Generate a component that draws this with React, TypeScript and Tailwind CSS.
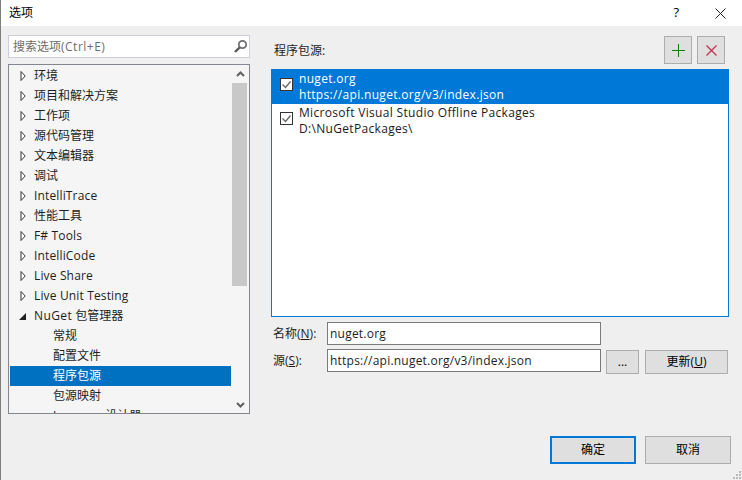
import { ReactNode } from 'react';

const font = "font-['Open_Sans','Noto_Sans_CJK_SC',sans-serif]";

const treeItems = ['环境', '项目和解决方案', '工作项', '源代码管理', '文本编辑器', '调试', 'IntelliTrace', '性能工具', 'F# Tools', 'IntelliCode', 'Live Share', 'Live Unit Testing'];
const subItems = ['常规', '配置文件', '程序包源', '包源映射'];

function Collapsed() {
  return (
    <svg width="6" height="10" viewBox="0 0 6 10" className="shrink-0">
      <path d="M1 .5 L5.2 5 L1 9.5 Z" fill="#fff" stroke="#333" strokeWidth="1" />
    </svg>
  );
}

function Expanded() {
  return (
    <svg width="7" height="7" viewBox="0 0 7 7" className="shrink-0">
      <path d="M7 0 V7 H0 Z" fill="#222" />
    </svg>
  );
}

function Check() {
  return (
    <div className="w-[13px] h-[13px] border border-[#333] bg-white flex items-center justify-center shrink-0">
      <svg width="11" height="11" viewBox="0 0 11 11">
        <path d="M1.5 5.5 L4.5 8.5 L9.5 2.5" fill="none" stroke="#666" strokeWidth="1.3" />
      </svg>
    </div>
  );
}

function Button({ className, children, primary }: { className: string; children: ReactNode; primary?: boolean }) {
  return (
    <div className={`flex items-center justify-center bg-[#dfdfdf] text-[12px] text-black ${primary ? 'border-2 border-[#0078d7]' : 'border border-[#adadad]'} ${className}`}>
      {children}
    </div>
  );
}

function Source({ name, url, selected }: { name: string; url: string; selected?: boolean }) {
  return (
    <div className={`flex h-[35px] pl-[8px] ${selected ? 'bg-[#0078d7] text-white' : '-mt-px text-[#1a1a1a]'}`}>
      <div className="pt-[9px] pr-[6px]"><Check /></div>
      <div className="text-[12px] leading-[16px] pt-[2px] tracking-[0.32px]">
        <div>{name}</div>
        <div>{url}</div>
      </div>
    </div>
  );
}

export default function App() {
  return (
    <div className={`w-[742px] h-[480px] bg-[#efefef] border-l border-[#7f7f7f] overflow-hidden relative ${font}`}>
      <div className="h-[26px] bg-white flex items-center text-[12px] text-black">
        <span className="pl-[8px] flex-1">选项</span>
        <span className="mr-[36px] text-[13px]">?</span>
        <svg width="11" height="11" viewBox="0 0 11 11" className="mr-[16px]">
          <path d="M.5 .5 L10.5 10.5 M10.5 .5 L.5 10.5" stroke="#222" strokeWidth="1" fill="none" />
        </svg>
      </div>

      <div className="flex">
        <div className="w-[242px] ml-[7px] mt-[9px] shrink-0">
          <div className="h-[23px] bg-white border border-[#cccedb] flex items-center justify-between pl-[4px] pr-[1px]">
            <span className="text-[12px] text-[#6d6d6d]">搜索选项<span className="tracking-[0.5px]">(Ctrl+E)</span></span>
            <svg width="15" height="15" viewBox="0 0 15 15">
              <circle cx="9.5" cy="5.5" r="3.7" fill="none" stroke="#707070" strokeWidth="1.8" />
              <path d="M6.7 8.3 L2 13" stroke="#5a5a5a" strokeWidth="2.4" />
            </svg>
          </div>
          <div className="h-[350px] mt-[6px] border border-[#828790] bg-[#f5f5f5] flex overflow-hidden">
            <div className="flex-1 pt-[1px] pl-[1px] text-[12px] text-[#1e1e1e] min-w-0">
              {treeItems.map((t) => (
                <div key={t} className="h-[20px] flex items-center pl-[10px]">
                  <Collapsed />
                  <span className={`ml-[8px] ${/^[ -~]+$/.test(t) ? 'tracking-[0.15px]' : ''}`}>{t}</span>
                </div>
              ))}
              <div className="h-[20px] flex items-center pl-[9px]">
                <Expanded />
                <span className="ml-[8px]"><span className="tracking-[0.4px]">NuGet</span> 包管理器</span>
              </div>
              {subItems.map((t) => (
                <div key={t} className={`h-[20px] flex items-center pl-[43px] ${t === '程序包源' ? 'bg-[#0070c0] text-white' : ''}`}>
                  {t}
                </div>
              ))}
              <div className="h-[20px] flex items-center pl-[43px]">
                Logger<span className="ml-[14px]">设计器</span>
              </div>
            </div>
            <div className="w-[18px] shrink-0 flex flex-col">
              <div className="h-[18px] flex items-center justify-center">
                <svg width="9" height="6" viewBox="0 0 9 6"><path d="M1 5 L4.5 1.5 L8 5" fill="none" stroke="#606060" strokeWidth="2" /></svg>
              </div>
              <div className="h-[203px] w-[15px] bg-[#c8c8c8] ml-px" />
              <div className="flex-1" />
              <div className="h-[17px] flex items-center justify-center">
                <svg width="9" height="6" viewBox="0 0 9 6"><path d="M1 1 L4.5 4.5 L8 1" fill="none" stroke="#606060" strokeWidth="2" /></svg>
              </div>
            </div>
          </div>
        </div>

        <div className="ml-[21px] flex-1">
          <div className="h-[43px] flex items-start">
            <span className="ml-[3px] mt-[16px] text-[12px] text-[#1e1e1e] flex-1">程序包源:</span>
            <Button className="w-[28px] h-[28px] mt-[10px]">
              <svg width="13" height="13" viewBox="0 0 13 13"><path d="M6.5 0 V13 M0 6.5 H13" stroke="#107c10" strokeWidth="1" /></svg>
            </Button>
            <Button className="w-[28px] h-[28px] mt-[10px] ml-[5px] mr-[17px]">
              <svg width="11" height="11" viewBox="0 0 11 11"><path d="M.5 .5 L10.5 10.5 M10.5 .5 L.5 10.5" stroke="#c1334f" strokeWidth="1.3" /></svg>
            </Button>
          </div>
          <div className="w-[458px] h-[248px] bg-white border border-t-0 border-[#0078d7]">
            <Source name="nuget.org" url="https://api.nuget.org/v3/index.json" selected />
            <Source name="Microsoft Visual Studio Offline Packages" url="D:\NuGetPackages\" />
          </div>
          <div className="flex items-center mt-[5px] h-[23px] text-[12px] text-[#1e1e1e]">
            <span className="w-[54px] ml-[2px]">名称(<u>N</u>):</span>
            <div className="w-[274px] h-[23px] bg-white border border-[#7a7a7a] flex items-center pl-[2px] tracking-[0.22px]">nuget.org</div>
          </div>
          <div className="flex items-start mt-[4px] h-[23px] text-[12px] text-[#1e1e1e]">
            <span className="w-[54px] ml-[2px] leading-[23px]">源(<u>S</u>):</span>
            <div className="w-[274px] h-[23px] bg-white border border-[#7a7a7a] flex items-center pl-[2px] tracking-[0.22px]">https://api.nuget.org/v3/index.json</div>
            <Button className="w-[33px] h-[24px] ml-[5px] mt-px">...</Button>
            <Button className="w-[83px] h-[24px] ml-[6px] mt-px">更新(<u>U</u>)</Button>
          </div>
          <div className="flex mt-[64px] ml-[279px]">
            <Button primary className="w-[86px] h-[28px]">确定</Button>
            <Button className="w-[86px] h-[28px] ml-[9px]">取消</Button>
          </div>
        </div>
      </div>

      <svg width="10" height="10" viewBox="0 0 10 10" className="absolute right-0 bottom-0">
        <path d="M7 1h2v2H7z M4 4h2v2H4z M7 4h2v2H7z M1 7h2v2H1z M4 7h2v2H4z M7 7h2v2H7z" fill="#b8b8b8" />
      </svg>
    </div>
  );
}
